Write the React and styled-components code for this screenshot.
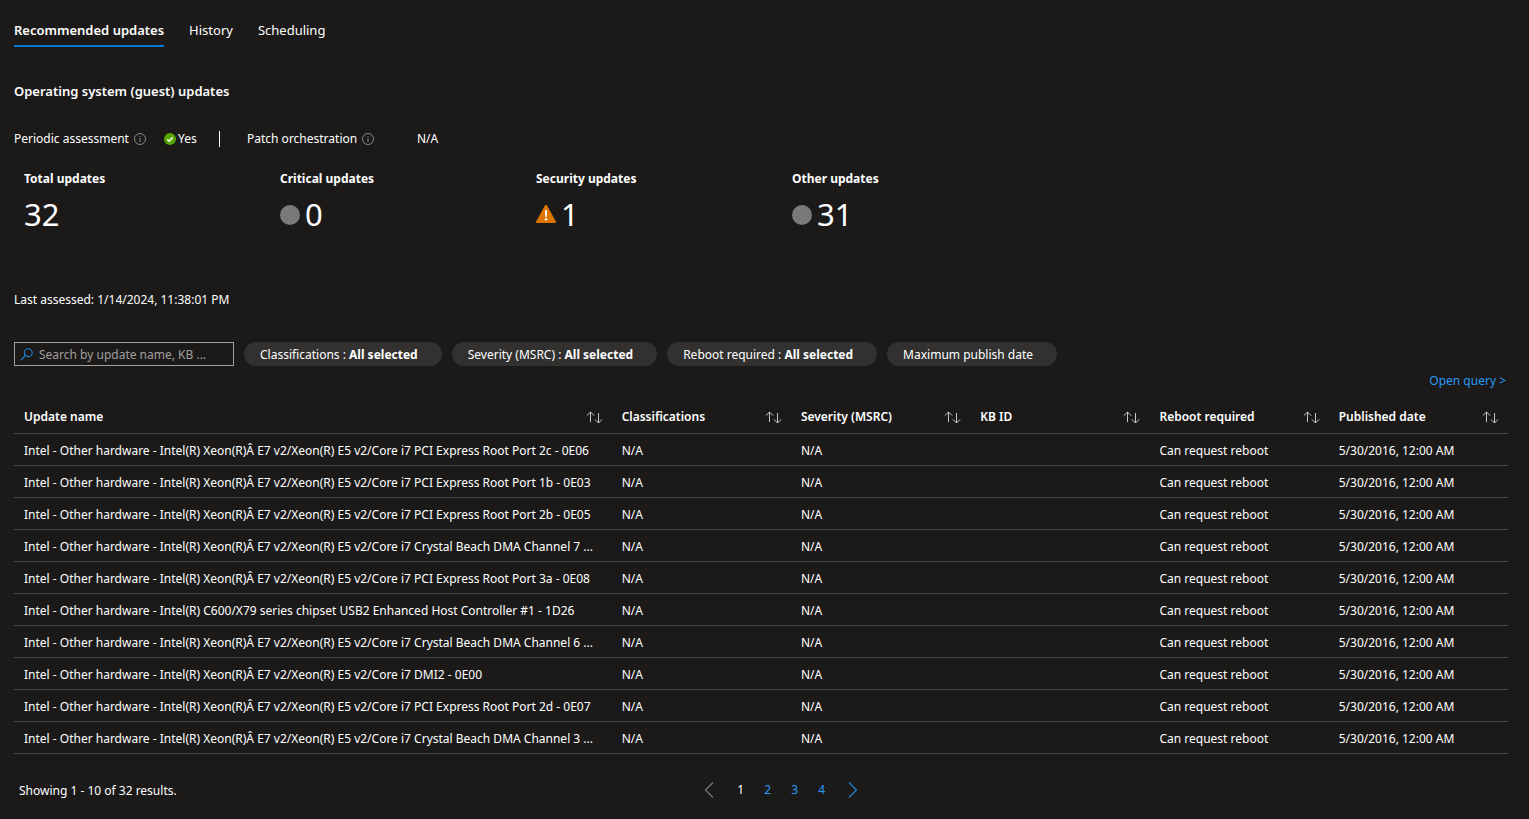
import React, { useState } from 'react';
import styled, { createGlobalStyle } from 'styled-components';

const filters = [
    { label: 'Classifications', value: 'All selected' },
    { label: 'Severity (MSRC)', value: 'All selected' },
    { label: 'Reboot required', value: 'All selected' },
    { label: 'Maximum publish date' },
];

const stats = [
    { label: 'Total updates', value: 32 },
    { label: 'Critical updates', value: 0, icon: 'dot' },
    { label: 'Security updates', value: 1, icon: 'warning' },
    { label: 'Other updates', value: 31, icon: 'dot' },
];

const columns = ['Update name', 'Classifications', 'Severity (MSRC)', 'KB ID', 'Reboot required', 'Published date'];

const xeon = 'Intel - Other hardware - Intel(R) Xeon(R)Â E7 v2/Xeon(R) E5 v2/Core i7 ';

const updates = [
    xeon + 'PCI Express Root Port 2c - 0E06',
    xeon + 'PCI Express Root Port 1b - 0E03',
    xeon + 'PCI Express Root Port 2b - 0E05',
    xeon + 'Crystal Beach DMA Channel 7 ...',
    xeon + 'PCI Express Root Port 3a - 0E08',
    'Intel - Other hardware - Intel(R) C600/X79 series chipset USB2 Enhanced Host Controller #1 - 1D26',
    xeon + 'Crystal Beach DMA Channel 6 ...',
    xeon + 'DMI2 - 0E00',
    xeon + 'PCI Express Root Port 2d - 0E07',
    xeon + 'Crystal Beach DMA Channel 3 ...',
];

const InfoIcon = () => (
    <svg width="12" height="12" viewBox="0 0 12 12" fill="none" stroke="#8a8886">
        <circle cx="6" cy="6" r="5.5" />
        <path d="M6 5v4M6 3v1" />
    </svg>
);

const CheckIcon = () => (
    <svg width="12" height="12" viewBox="0 0 12 12">
        <circle cx="6" cy="6" r="6" fill="#57a300" />
        <path d="M3.2 6.2l2 2 3.6-4" fill="none" stroke="#fff" strokeWidth="1.5" />
    </svg>
);

const WarningIcon = () => (
    <svg width="20" height="20" viewBox="0 0 20 20">
        <path d="M8.9 .6a1.3 1.3 0 0 1 2.2 0l8.7 15.7c.5.8-.1 1.7-1 1.7H1.2c-.9 0-1.5-.9-1-1.7z" fill="#db7500" />
        <path d="M8.9 5.2h2.2l-.3 6.8H9.2z" fill="#fff" />
        <circle cx="10" cy="14.3" r="1.2" fill="#fff" />
    </svg>
);

const DotIcon = () => (
    <svg width="20" height="20" viewBox="0 0 20 20">
        <circle cx="10" cy="10" r="10" fill="#7a7a7a" />
    </svg>
);

const SearchIcon = () => (
    <svg width="13" height="13" viewBox="0 0 13 13" fill="none" stroke="#2184d8" strokeWidth="1.1">
        <circle cx="8.3" cy="4.7" r="3.9" />
        <path d="M5.5 7.5L.6 12.4" />
    </svg>
);

const SortIcon = () => (
    <svg width="17" height="13" viewBox="0 0 17 13" fill="none" stroke="#c8c6c4">
        <path d="M4.5 11V1M.8 4.7L4.5 1l3.7 3.7" />
        <path d="M12.5 2v10M8.8 8.3l3.7 3.7 3.7-3.7" />
    </svg>
);

const ChevronIcon = ({ next }) => (
    <svg width="10" height="16" viewBox="0 0 10 16" fill="none" stroke="currentColor" strokeWidth="1.2">
        <path d={next ? 'M1 .5L8.5 8 1 15.5' : 'M9 .5L1.5 8 9 15.5'} />
    </svg>
);

const App = () => {
    const [tab, setTab] = useState('Recommended updates');
    const [page, setPage] = useState(1);

    return (
        <Page>
            <GlobalStyle />
            <Tabs>
                {['Recommended updates', 'History', 'Scheduling'].map((name) => (
                    <Tab key={name} $active={tab === name} onClick={() => setTab(name)}>{name}</Tab>
                ))}
            </Tabs>

            <Heading>Operating system (guest) updates</Heading>

            <Status>
                <StatusItem>Periodic assessment <InfoIcon /></StatusItem>
                <StatusValue><CheckIcon />Yes</StatusValue>
                <Divider />
                <StatusItem>Patch orchestration <InfoIcon /></StatusItem>
                <StatusValue>N/A</StatusValue>
            </Status>

            <Stats>
                {stats.map(({ label, value, icon }) => (
                    <div key={label}>
                        <StatLabel>{label}</StatLabel>
                        <StatValue>
                            {icon === 'dot' && <DotIcon />}
                            {icon === 'warning' && <WarningIcon />}
                            {value}
                        </StatValue>
                    </div>
                ))}
            </Stats>

            <Assessed>Last assessed: 1/14/2024, 11:38:01 PM</Assessed>

            <Filters>
                <SearchBox>
                    <SearchIcon />
                    <input type="text" aria-label="Search" placeholder="Search by update name, KB ..." />
                </SearchBox>
                {filters.map(({ label, value }) => (
                    <Pill key={label}>
                        {label}{value && <> : <b>{value}</b></>}
                    </Pill>
                ))}
            </Filters>

            <QueryRow>
                <a href="#query">Open query &gt;</a>
            </QueryRow>

            <Table>
                <thead>
                    <tr>
                        {columns.map((name) => (
                            <th key={name}>
                                <SortButton>{name}<SortIcon /></SortButton>
                            </th>
                        ))}
                    </tr>
                </thead>
                <tbody>
                    {updates.map((name) => (
                        <tr key={name}>
                            <td>{name}</td>
                            <td>N/A</td>
                            <td>N/A</td>
                            <td></td>
                            <td>Can request reboot</td>
                            <td>5/30/2016, 12:00 AM</td>
                        </tr>
                    ))}
                </tbody>
            </Table>

            <Footer>
                <span>Showing 1 - 10 of 32 results.</span>
                <Pager>
                    <PageArrow aria-label="Previous page" disabled={page === 1} onClick={() => setPage(page - 1)}>
                        <ChevronIcon />
                    </PageArrow>
                    {[1, 2, 3, 4].map((n) => (
                        <PageButton key={n} $active={n === page} onClick={() => setPage(n)}>{n}</PageButton>
                    ))}
                    <PageArrow $next aria-label="Next page" disabled={page === 4} onClick={() => setPage(page + 1)}>
                        <ChevronIcon next />
                    </PageArrow>
                </Pager>
            </Footer>
        </Page>
    );
}

const GlobalStyle = createGlobalStyle`
    * {
        box-sizing: border-box;
    }
    body {
        margin: 0;
        background-color: #1b1a19;
        color: #fff;
        font-family: "Segoe UI", "Noto Sans", "Open Sans", sans-serif;
        font-size: 12px;
        line-height: 18px;
    }
    button, input {
        font: inherit;
        color: inherit;
        background: none;
        border: none;
        padding: 0;
    }
    button {
        cursor: pointer;
    }
    a {
        color: #2899f5;
        text-decoration: none;
    }
    svg {
        flex-shrink: 0;
    }
`;

const Page = styled.main`
    padding: 21px 21px 21px 14px;
`;

const Tabs = styled.nav`
    display: flex;
    gap: 25px;
    margin-bottom: 35px;
`;

const Tab = styled.button`
    padding-bottom: 6px;
    border-bottom: 2px solid ${({ $active }) => ($active ? '#0078d4' : 'transparent')};
    font-size: 13px;
    font-weight: ${({ $active }) => ($active ? 600 : 400)};
`;

const Heading = styled.h2`
    margin: 0 0 30px;
    font-size: 13px;
    font-weight: 600;
`;

const Status = styled.div`
    display: grid;
    grid-template-columns: 150px 55px 28px 170px auto;
    align-items: center;
    margin-bottom: 22px;
`;

const StatusItem = styled.div`
    display: flex;
    align-items: center;
    gap: 5px;
`;

const StatusValue = styled.div`
    display: flex;
    align-items: center;
    gap: 2px;
`;

const Divider = styled.div`
    width: 1px;
    height: 16px;
    background-color: #fff;
`;

const Stats = styled.div`
    display: grid;
    grid-template-columns: repeat(4, 256px);
    padding-left: 10px;
    margin-bottom: 56px;
`;

const StatLabel = styled.div`
    font-weight: 700;
    margin-bottom: 6px;
`;

const StatValue = styled.div`
    display: flex;
    align-items: center;
    gap: 5px;
    font-size: 31px;
    line-height: 40px;
    svg {
        margin-top: 2px;
    }
`;

const Assessed = styled.div`
    padding-top: 1px;
    margin-bottom: 33px;
`;

const Filters = styled.div`
    display: flex;
    gap: 10px;
    margin-bottom: 6px;
`;

const SearchBox = styled.label`
    display: flex;
    align-items: center;
    gap: 6px;
    width: 220px;
    height: 24px;
    padding: 0 5px;
    border: 1px solid #a19f9d;
    input {
        flex: 1;
        min-width: 0;
        padding-top: 2px;
        outline: none;
        &::placeholder {
            color: #a19f9d;
            opacity: 1;
        }
    }
`;

const Pill = styled.button`
    height: 24px;
    padding: 2px 24px 0 16px;
    border-radius: 12px;
    background-color: #323130;
    white-space: pre;
    b {
        font-weight: 700;
    }
`;

const QueryRow = styled.div`
    display: flex;
    justify-content: flex-end;
    padding-right: 2px;
    margin-bottom: 10px;
`;

const Table = styled.table`
    width: 100%;
    table-layout: fixed;
    border-collapse: collapse;
    margin-bottom: 26px;
    th, td {
        height: 32px;
        padding: 4px 0 0 10px;
        border-bottom: 1px solid #484644;
        text-align: left;
        white-space: nowrap;
        overflow: hidden;
        text-overflow: ellipsis;
    }
    th {
        width: 12%;
        height: 33px;
        padding-top: 2px;
        font-weight: 600;
        &:first-child {
            width: 40%;
        }
    }
`;

const SortButton = styled.button`
    display: flex;
    justify-content: space-between;
    align-items: center;
    width: 100%;
    padding-right: 9px;
`;

const Footer = styled.footer`
    display: grid;
    grid-template-columns: 46% 1fr;
    align-items: center;
    span {
        padding: 2px 0 0 5px;
    }
`;

const Pager = styled.div`
    display: flex;
    align-items: center;
`;

const PageButton = styled.button`
    width: 27px;
    color: ${({ $active }) => ($active ? '#fff' : '#2899f5')};
`;

const PageArrow = styled.button`
    display: flex;
    justify-content: ${({ $next }) => ($next ? 'flex-end' : 'flex-start')};
    width: 26px;
    padding: 0 3px;
    color: #2184d8;
    &:disabled {
        color: #797775;
        cursor: default;
    }
`;

export default App;
